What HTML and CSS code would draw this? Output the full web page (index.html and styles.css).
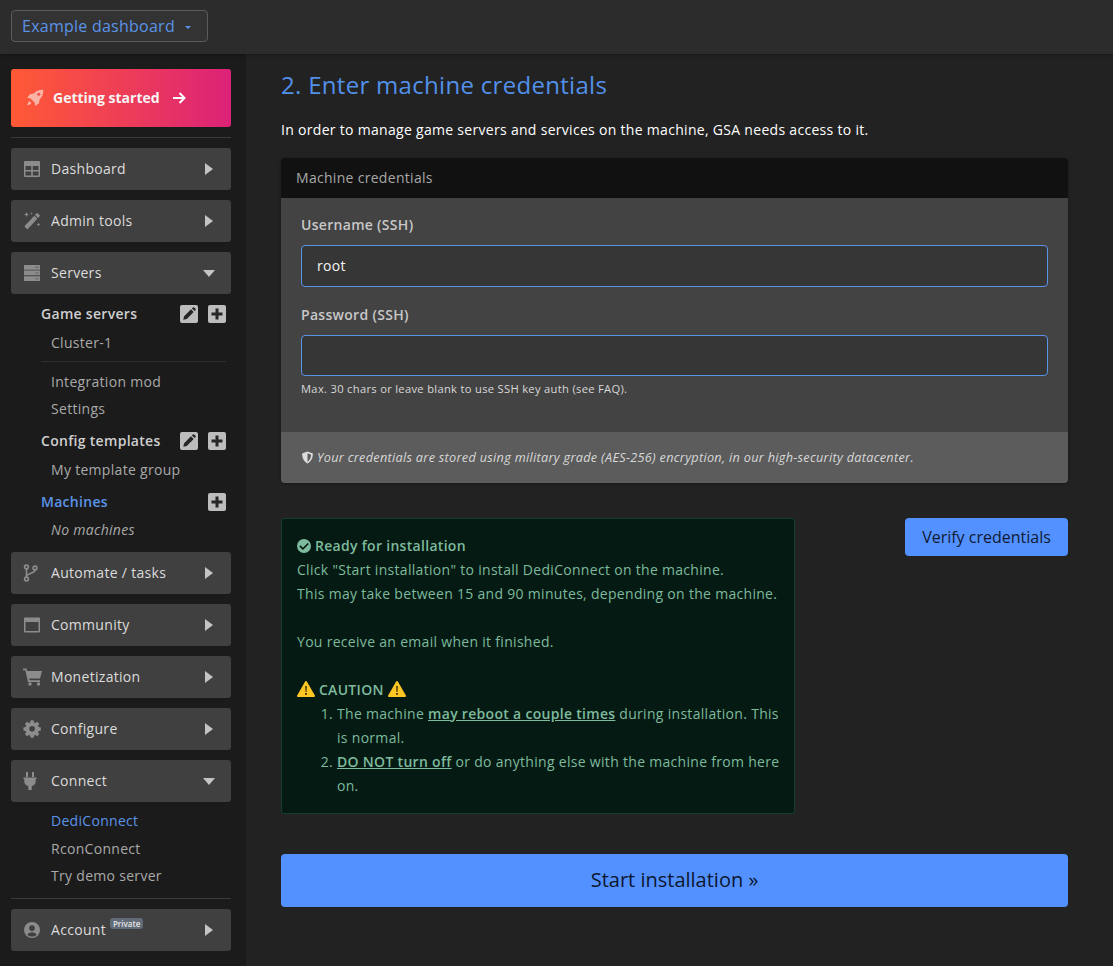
FILE: index.html
```html
<!DOCTYPE html>
<html lang="en">
<head>
    <meta charset="UTF-8">
    <meta name="viewport" content="width=device-width, initial-scale=1.0">
    <title>Enter machine credentials</title>
    <link rel="stylesheet" href="styles.css">
</head>
<body>
    <!-- Top bar -->
    <header class="topbar">
        <button class="dash-select">Example dashboard <span class="caret"></span></button>
    </header>

    <div class="layout">
        <!-- Sidebar -->
        <nav class="sidebar">
            <a class="getting-started">
                <svg class="rocket" viewBox="0 0 18 18"><path d="M17.2.8c.3 3.6-.6 7-3.6 9.6l-.6 3.900-3.600 2.700-.6-3.300-4.300-4.300-3.300-.6 2.700-3.600 3.900-.6C10.400 1.500 13.600.5 17.200.8z"/><path d="M3.600 12.200c-1.300.5-2 2-2.200 4 2-.2 3.500-.9 4-2.200z"/><circle cx="12.800" cy="5.200" r="1.500" fill="#f2504a"/></svg>
                <span>Getting started</span>
                <svg class="arrow" viewBox="0 0 14 14"><path d="M1 7h11M7.500 2l5 5-5 5" fill="none" stroke="#fff" stroke-width="2"/></svg>
            </a>
            <hr class="side-rule rule-top">

            <a class="menu-item">
                <svg class="menu-icon" viewBox="0 0 18 18"><path fill-rule="evenodd" d="M2 1h14a1 1 0 0 1 1 1v14a1 1 0 0 1-1 1H2a1 1 0 0 1-1-1V2a1 1 0 0 1 1-1zm.5 5v4h5.700V6zm7.300 0v4h5.700V6zm-7.300 5.400v4h5.700v-4zm7.300 0v4h5.700v-4z"/></svg>
                <span>Dashboard</span><i class="tri-right"></i>
            </a>
            <a class="menu-item">
                <svg class="menu-icon" viewBox="0 0 18 18"><path d="M14.200.8l3 3-2.200 2.200-3-3zM11.300 3.700l3 3L5 16.800a1 1 0 0 1-1.400 0l-1.700-1.700a1 1 0 0 1 0-1.400z"/><path d="M3.500 0l.7 1.800 1.800.7-1.800.7L3.500 5l-.7-1.800L1 2.500l1.800-.7zM8.500 0l.4 1 1 .4-1 .4-.4 1-.4-1-1-.4 1-.4zM15.500 10.500l.6 1.400 1.400.6-1.400.6-.6 1.400-.6-1.400-1.400-.6 1.400-.6z"/></svg>
                <span>Admin tools</span><i class="tri-right"></i>
            </a>
            <a class="menu-item">
                <svg class="menu-icon" viewBox="0 0 18 18"><path fill-rule="evenodd" d="M1 1h16v4.700H1zm11.500 1.800v1h1v-1zm2 0v1h1v-1zM1 6.600h16v4.700H1zm11.500 1.900v1h1v-1zm2 0v1h1v-1zM1 12.300h16V17H1zm11.500 1.900v1h1v-1zm2 0v1h1v-1z"/></svg>
                <span>Servers</span><i class="tri-down"></i>
            </a>

            <div class="submenu submenu-servers">
                <div class="sub-head">
                    <span>Game servers</span>
                    <span class="sub-tools">
                        <i class="tool"><svg viewBox="0 0 18 18"><path d="M11.500 3.800l2.700 2.700-6.900 6.900-3.500.8.800-3.500zM12.400 2.900l.9-.9a1 1 0 0 1 1.400 0l1.300 1.300a1 1 0 0 1 0 1.400l-.9.900z" transform="translate(-.5 .5)"/></svg></i>
                        <i class="tool"><svg viewBox="0 0 18 18"><path d="M7.500 3.500h3v4h4v3h-4v4h-3v-4h-4v-3h4z"/></svg></i>
                    </span>
                </div>
                <a class="sub-link cluster">Cluster-1</a>
                <hr class="sub-rule">
                <a class="sub-link">Integration mod</a>
                <a class="sub-link">Settings</a>
                <div class="sub-head head-config">
                    <span>Config templates</span>
                    <span class="sub-tools">
                        <i class="tool"><svg viewBox="0 0 18 18"><path d="M11.500 3.800l2.700 2.700-6.900 6.900-3.500.8.800-3.500zM12.400 2.900l.9-.9a1 1 0 0 1 1.400 0l1.300 1.300a1 1 0 0 1 0 1.400l-.9.900z" transform="translate(-.5 .5)"/></svg></i>
                        <i class="tool"><svg viewBox="0 0 18 18"><path d="M7.500 3.500h3v4h4v3h-4v4h-3v-4h-4v-3h4z"/></svg></i>
                    </span>
                </div>
                <a class="sub-link template">My template group</a>
                <div class="sub-head head-machines">
                    <span class="active">Machines</span>
                    <span class="sub-tools">
                        <i class="tool"><svg viewBox="0 0 18 18"><path d="M7.500 3.500h3v4h4v3h-4v4h-3v-4h-4v-3h4z"/></svg></i>
                    </span>
                </div>
                <em class="sub-link no-machines">No machines</em>
            </div>

            <a class="menu-item">
                <svg class="menu-icon" viewBox="0 0 18 18"><circle cx="3.500" cy="3" r="1.900" fill="none" stroke="#8c8c8c" stroke-width="1.600"/><circle cx="3.500" cy="15" r="1.900" fill="none" stroke="#8c8c8c" stroke-width="1.600"/><circle cx="12" cy="4" r="1.900" fill="none" stroke="#8c8c8c" stroke-width="1.600"/><path d="M3.500 5v8M12 6c0 4-8.500 2.500-8.500 7" fill="none" stroke="#8c8c8c" stroke-width="1.600"/></svg>
                <span>Automate / tasks</span><i class="tri-right"></i>
            </a>
            <a class="menu-item">
                <svg class="menu-icon" viewBox="0 0 18 18"><path fill-rule="evenodd" d="M2 1.500h14a1 1 0 0 1 1 1v13a1 1 0 0 1-1 1H2a1 1 0 0 1-1-1v-13a1 1 0 0 1 1-1zm.5 4.500v9h13V6z"/></svg>
                <span>Community</span><i class="tri-right"></i>
            </a>
            <a class="menu-item">
                <svg class="menu-icon cart" viewBox="0 0 20 18"><path d="M0 .5h3.500l.7 2.500H19l-2 7.500H6.200l.4 1.700H17v1.800H5L2.300 2.300H0z"/><circle cx="7" cy="16" r="1.700"/><circle cx="15.500" cy="16" r="1.700"/></svg>
                <span>Monetization</span><i class="tri-right"></i>
            </a>
            <a class="menu-item">
                <svg class="menu-icon" viewBox="0 0 18 18"><path fill-rule="evenodd" d="M7.500 1h3l.4 2.200 1.300.6 1.900-1.300 2.100 2.100-1.300 1.900.6 1.300 2.200.4v3l-2.200.4-.6 1.300 1.300 1.900-2.100 2.100-1.900-1.300-1.300.6-.4 2.200h-3l-.4-2.200-1.300-.6-1.900 1.300-2.100-2.100 1.300-1.900-.6-1.300L.3 11.200v-3l2.200-.4.600-1.300L1.800 4.600l2.100-2.100 1.900 1.300 1.300-.6zM9 6.700a2.800 2.800 0 1 0 0 5.600 2.800 2.800 0 0 0 0-5.600z" transform="translate(.1 -.7)"/></svg>
                <span>Configure</span><i class="tri-right"></i>
            </a>
            <a class="menu-item">
                <svg class="menu-icon" viewBox="0 0 18 18"><path d="M3 0h2v5H3zM9 0h2v5H9zM.5 5.500h13V7h-.8v2.500c0 2.500-1.700 4.200-4 4.600V18H5.300v-3.900c-2.300-.4-4-2.100-4-4.600V7H.5z"/></svg>
                <span>Connect</span><i class="tri-down"></i>
            </a>

            <div class="submenu submenu-connect">
                <a class="sub-link active dedi">DediConnect</a>
                <a class="sub-link">RconConnect</a>
                <a class="sub-link">Try demo server</a>
            </div>
            <hr class="side-rule rule-bottom">

            <a class="menu-item">
                <svg class="menu-icon" viewBox="0 0 18 18"><path fill-rule="evenodd" d="M9 1a8 8 0 1 1 0 16A8 8 0 0 1 9 1zm0 3.200a2.900 2.900 0 1 0 0 5.800 2.900 2.900 0 0 0 0-5.800zm0 7c-2.100 0-3.900 1-4.700 2.500A6.200 6.200 0 0 0 9 15.600c1.900 0 3.600-.7 4.700-1.900-.8-1.500-2.600-2.500-4.700-2.500z"/></svg>
                <span class="account">Account<sup class="badge">Private</sup></span><i class="tri-right"></i>
            </a>
        </nav>

        <!-- Main content -->
        <main class="content">
            <h2>2. Enter machine credentials</h2>
            <p class="intro">In order to manage game servers and services on the machine, GSA needs access to it.</p>

            <section class="card">
                <div class="card-header">Machine credentials</div>
                <div class="card-body">
                    <div class="field">
                        <label for="ssh-user">Username (SSH)</label>
                        <input type="text" id="ssh-user" value="root">
                    </div>
                    <div class="field">
                        <label for="ssh-pass">Password (SSH)</label>
                        <input type="password" id="ssh-pass">
                        <small>Max. 30 chars or leave blank to use SSH key auth (see FAQ).</small>
                    </div>
                </div>
                <div class="card-footer">
                    <svg class="shield" viewBox="0 0 14 14"><path fill-rule="evenodd" d="M7 .5l5.800 2.200c0 4.800-2 8.900-5.800 10.800C3.200 11.600 1.200 7.500 1.200 2.700zm0 2v9c2.400-1.500 3.700-4.300 3.900-7.500z"/></svg>
                    <em>Your credentials are stored using military grade (AES-256) encryption, in our high-security datacenter.</em>
                </div>
            </section>

            <div class="status-row">
                <div class="alert">
                    <strong class="alert-title">
                        <svg class="check" viewBox="0 0 14 14"><path fill-rule="evenodd" d="M7 0a7 7 0 1 1 0 14A7 7 0 0 1 7 0zm3.700 3.900L5.900 8.700 3.500 6.300 2.300 7.500l3.600 3.600 6-6z"/></svg>
                        Ready for installation
                    </strong><br>
                    Click "Start installation" to install DediConnect on the machine.<br>
                    This may take between 15 and 90 minutes, depending on the machine.<br>
                    <br>
                    You receive an email when it finished.<br>
                    <br>
                    <span class="caution">
                        <svg class="warn" viewBox="0 0 18 16"><path d="M9 1L17 15H1z" fill="#fdc623" stroke="#fdc623" stroke-width="2" stroke-linejoin="round"/><path d="M8.200 5h1.600l-.3 6h-1zM8.100 12h1.800v1.800H8.100z" fill="#3a2d05"/></svg>
                        CAUTION
                        <svg class="warn" viewBox="0 0 18 16"><path d="M9 1L17 15H1z" fill="#fdc623" stroke="#fdc623" stroke-width="2" stroke-linejoin="round"/><path d="M8.200 5h1.600l-.3 6h-1zM8.100 12h1.800v1.800H8.100z" fill="#3a2d05"/></svg>
                    </span>
                    <ol>
                        <li>The machine <b>may reboot a couple times</b> during installation. This is normal.</li>
                        <li><b>DO NOT turn off</b> or do anything else with the machine from here on.</li>
                    </ol>
                </div>
                <button class="btn-verify">Verify credentials</button>
            </div>

            <button class="btn-start">Start installation »</button>
        </main>
    </div>
</body>
</html>
```

FILE: styles.css
```css
* {
    box-sizing: border-box;
}

html, body {
    height: 100%;
}

body {
    font-family: 'Open Sans', sans-serif;
    margin: 0;
    padding: 0;
    background-color: #222222;
    color: #fff;
    font-size: 14px;
    letter-spacing: 0.3px;
    overflow: hidden;
}

/* top bar */
.topbar {
    height: 54px;
    background: #2c2c2c;
    padding: 10px 11px;
    box-shadow: 0 1px 3px rgba(0, 0, 0, 0.3);
    position: relative;
}

.dash-select {
    height: 32px;
    width: 197px;
    padding: 0 10px;
    background: #333;
    border: 1px solid #5c5c5c;
    border-radius: 4px;
    color: #5b93e8;
    font-family: inherit;
    font-size: 16px;
    letter-spacing: 0.25px;
    text-align: left;
    display: flex;
    align-items: center;
}

.caret {
    display: inline-block;
    margin-left: 10px;
    margin-top: 2px;
    border-left: 3px solid transparent;
    border-right: 3px solid transparent;
    border-top: 3px solid #5b93e8;
}

.layout {
    display: flex;
    height: 912px;
}

/* sidebar */
.sidebar {
    width: 246px;
    flex: none;
    background: #1b1b1b;
    padding: 15px 15px 0 11px;
    display: flex;
    flex-direction: column;
}

.getting-started {
    height: 58px;
    flex: none;
    border-radius: 3px;
    background: linear-gradient(90deg, #ff5a35, #dc2278);
    display: flex;
    align-items: center;
    padding-left: 15px;
    font-weight: 700;
    letter-spacing: 0;
    color: #f5f5f5;
}

.getting-started span {
    margin-top: -2px;
}

.rocket {
    width: 18px;
    height: 18px;
    fill: #f9b3a5;
    margin-right: 9px;
}

.arrow {
    width: 14px;
    height: 14px;
    margin-left: 12px;
}

.side-rule {
    border: 0;
    border-top: 1px solid #3b3b3b;
    margin: 0;
    flex: none;
}

.rule-top {
    margin: 10px 0 10px;
}

.rule-bottom {
    margin: 9px 0 10px;
}

.menu-item {
    height: 42px;
    flex: none;
    background: #404040;
    border-radius: 3px;
    display: flex;
    align-items: center;
    padding: 0 18px 0 12px;
    color: #dcdcdc;
    margin-bottom: 10px;
}

.menu-icon {
    width: 18px;
    height: 18px;
    flex: none;
    fill: #8c8c8c;
    margin-right: 10px;
}

.cart {
    width: 20px;
    margin-right: 8px;
}

.menu-item span {
    flex: 1;
    margin-top: -2px;
}

.tri-right {
    border-top: 6px solid transparent;
    border-bottom: 6px solid transparent;
    border-left: 8px solid #c4c4c4;
}

.tri-down {
    margin-left: -3px;
    margin-right: -2px;
    border-left: 6px solid transparent;
    border-right: 6px solid transparent;
    border-top: 7px solid #c4c4c4;
}

.badge {
    display: inline-block;
    vertical-align: top;
    margin: -2px 0 0 4px;
    padding: 0 3px;
    height: 11px;
    line-height: 11px;
    font-size: 8px;
    font-weight: 600;
    letter-spacing: 0;
    border-radius: 3px;
    background: #626b77;
    color: #e4e4e4;
}

.submenu {
    display: flex;
    flex-direction: column;
    flex: none;
    color: #a9a9a9;
    padding-left: 30px;
    padding-right: 5px;
}

.submenu-servers {
    height: 249px;
    margin-top: -1px;
}

.submenu-connect {
    margin-top: -5px;
}

.sub-head {
    height: 20px;
    display: flex;
    align-items: center;
    justify-content: space-between;
    font-weight: 600;
    color: #cfcfcf;
    flex: none;
}

.head-config,
.head-machines {
    margin-top: 8px;
}

.sub-head .active {
    color: #5b93e8;
}

.sub-tools {
    display: flex;
    gap: 10px;
    margin-top: 2px;
}

.tool {
    width: 18px;
    height: 18px;
    border-radius: 2px;
    background: #bdbdbd;
    display: block;
}

.tool svg {
    display: block;
    width: 18px;
    height: 18px;
    fill: #262626;
}

.sub-link {
    display: block;
    height: 27px;
    line-height: 27px;
    padding-left: 10px;
    flex: none;
}

.sub-link.active {
    color: #5b93e8;
}

.sub-link.dedi {
    height: 28px;
}

.cluster {
    margin-top: 6px;
}

.template {
    margin-top: 6px;
}

.no-machines {
    margin-top: 5px;
}

.sub-rule {
    border: 0;
    border-top: 1px solid #2e2e2e;
    margin: 5px 0 6px;
    flex: none;
    width: 100%;
}

/* main */
.content {
    flex: none;
    width: 787px;
    margin-left: 35px;
    padding-top: 14px;
}

h2 {
    margin: 0;
    font-size: 24px;
    line-height: 34px;
    font-weight: 400;
    color: #5290ea;
}

.intro {
    margin: 18px 0 18px;
    line-height: 20px;
    font-weight: 500;
}

.card {
    border-radius: 4px;
    overflow: hidden;
    box-shadow: 0 1px 3px rgba(0, 0, 0, 0.3);
}

.card-header {
    height: 40px;
    line-height: 40px;
    padding-left: 15px;
    background: #111;
    color: #a8a8a8;
}

.card-body {
    height: 234px;
    background: #434343;
    padding: 17px 20px 0;
}

.field {
    display: flex;
    flex-direction: column;
    margin-bottom: 18px;
}

.field label {
    font-weight: 600;
    color: #c8c8c8;
    line-height: 20px;
    margin-bottom: 10px;
}

.field input {
    height: 41.6px;
    background: #363636;
    border: 1px solid #5b93e8;
    border-radius: 4px;
    padding: 0 15px;
    color: #f4f4f4;
    font-family: inherit;
    font-size: 14px;
    letter-spacing: 0.3px;
}

.field small {
    font-size: 11.2px;
    color: #d8d8d8;
    line-height: 16px;
    margin-top: 4.4px;
}

.card-footer {
    height: 51px;
    background: #5c5c5c;
    padding-left: 20px;
    display: flex;
    align-items: center;
    font-size: 12.7px;
    color: #d8d8d8;
}

.card-footer em {
    margin-top: -1px;
}

.shield {
    width: 13px;
    height: 13px;
    fill: #dcdcdc;
    margin-right: 3px;
}

.status-row {
    display: flex;
    justify-content: space-between;
    align-items: flex-start;
    margin-top: 35px;
}

.alert {
    width: 514px;
    height: 296px;
    background: #051a12;
    border: 1px solid #12402c;
    border-radius: 3px;
    padding: 15px 13px 15px 15px;
    color: #7dba9e;
    line-height: 24px;
}

.alert-title {
    font-weight: 600;
}

.check {
    width: 14px;
    height: 14px;
    fill: #7dba9e;
    vertical-align: -2px;
}

.caution {
    font-weight: 600;
}

.warn {
    width: 18px;
    height: 16px;
    vertical-align: -2px;
}

.alert ol {
    margin: 0;
    padding-left: 40px;
}

.alert b {
    font-weight: 600;
    text-decoration: underline;
}

.btn-verify {
    width: 163px;
    height: 38px;
    background: #5291ff;
    border: none;
    border-radius: 4px;
    color: #111a33;
    font-family: inherit;
    font-size: 16px;
}

.btn-start {
    display: block;
    width: 100%;
    height: 53px;
    margin-top: 40px;
    padding-bottom: 3px;
    background: #5291ff;
    border: none;
    border-radius: 4px;
    color: #0c1630;
    font-family: inherit;
    font-size: 20px;
}
```
